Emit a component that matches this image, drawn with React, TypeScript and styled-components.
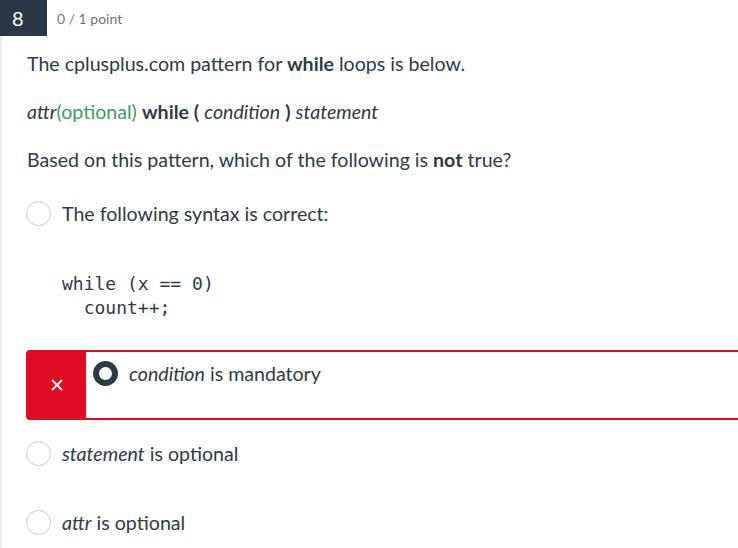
import React from 'react';
import styled, { createGlobalStyle } from 'styled-components';

const GlobalStyle = createGlobalStyle`
  html, body {
    margin: 0;
    padding: 0;
    background: #ffffff;
  }
  body {
    font-family: Lato, "Open Sans", sans-serif;
    color: #2d3b45;
  }
`;

const Page = styled.div`
  width: 738px;
  height: 548px;
  overflow: hidden;
  display: flex;
  flex-direction: column;
`;

const Header = styled.div`
  display: flex;
  align-items: center;
  height: 36px;
`;

const Badge = styled.div`
  width: 47px;
  height: 36px;
  background: #293846;
  color: #ffffff;
  font-size: 20px;
  display: flex;
  align-items: center;
  padding-left: 12px;
  box-sizing: border-box;
`;

const Points = styled.div`
  margin-left: 10px;
  font-size: 14px;
  color: #6b7780;
`;

const Body = styled.div`
  flex: 1;
  border-left: 2px solid #ebebeb;
  padding: 14px 0 0 25px;
`;

const Para = styled.p`
  margin: 0 0 21px;
  font-size: 19.6px;
  line-height: 27px;
`;

const Green = styled.span`
  color: #3f9b63;
`;

const Answers = styled.div`
  display: flex;
  flex-direction: column;
  margin-top: 28px;
`;

const Option = styled.div<{ $wrong?: boolean; $gap: number }>`
  display: flex;
  align-items: stretch;
  margin-left: -1px;
  margin-bottom: ${p => p.$gap}px;
  ${p =>
    p.$wrong &&
    `
    border: 2px solid #e10b23;
    border-right: none;
    border-radius: 4px 0 0 4px;
  `}
`;

const Mark = styled.div`
  width: 58px;
  background: #e10b23;
  display: flex;
  align-items: center;
  justify-content: center;
  color: #ffffff;
`;

const Choice = styled.div<{ $wrong?: boolean }>`
  display: flex;
  align-items: flex-start;
  gap: 11px;
  padding: ${p => (p.$wrong ? '9px 0 32px 7px' : '0')};
  flex: 1;
`;

const Radio = styled.span<{ $checked?: boolean }>`
  flex: none;
  width: 25px;
  height: 25px;
  box-sizing: border-box;
  border-radius: 50%;
  border: ${p => (p.$checked ? '6px solid #2d3b45' : '1px solid #c7cdd1')};
  background: #ffffff;
`;

const Label = styled.div`
  font-size: 19.6px;
  line-height: 25px;
`;

const Code = styled.pre`
  margin: 46px 0 0;
  font-family: "DejaVu Sans Mono", "Liberation Mono", monospace;
  font-size: 18px;
  line-height: 24px;
  color: #2d3b45;
`;

const Cross = () => (
  <svg width="14" height="14" viewBox="0 0 14 14">
    <path d="M2 2 L12 12 M12 2 L2 12" stroke="#ffffff" strokeWidth="1.8" fill="none" />
  </svg>
);

export default function App() {
  return (
    <Page>
      <GlobalStyle />
      <Header>
        <Badge>8</Badge>
        <Points>0 / 1 point</Points>
      </Header>
      <Body>
        <Para>
          The cplusplus.com pattern for <b>while</b> loops is below.
        </Para>
        <Para>
          <i>attr</i>
          <Green>(optional)</Green> <b>while (</b> <i>condition</i> <b>)</b> <i>statement</i>
        </Para>
        <Para>
          Based on this pattern, which of the following is <b>not</b> true?
        </Para>
        <Answers>
          <Option $gap={30}>
            <Choice>
              <Radio />
              <div>
                <Label>The following syntax is correct:</Label>
                <Code>{'while (x == 0)\n  count++;'}</Code>
              </div>
            </Choice>
          </Option>
          <Option $wrong $gap={21}>
            <Mark>
              <Cross />
            </Mark>
            <Choice $wrong>
              <Radio $checked />
              <Label>
                <i>condition</i> is mandatory
              </Label>
            </Choice>
          </Option>
          <Option $gap={44}>
            <Choice>
              <Radio />
              <Label>
                <i>statement</i> is optional
              </Label>
            </Choice>
          </Option>
          <Option $gap={44}>
            <Choice>
              <Radio />
              <Label>
                <i>attr</i> is optional
              </Label>
            </Choice>
          </Option>
        </Answers>
      </Body>
    </Page>
  );
}
